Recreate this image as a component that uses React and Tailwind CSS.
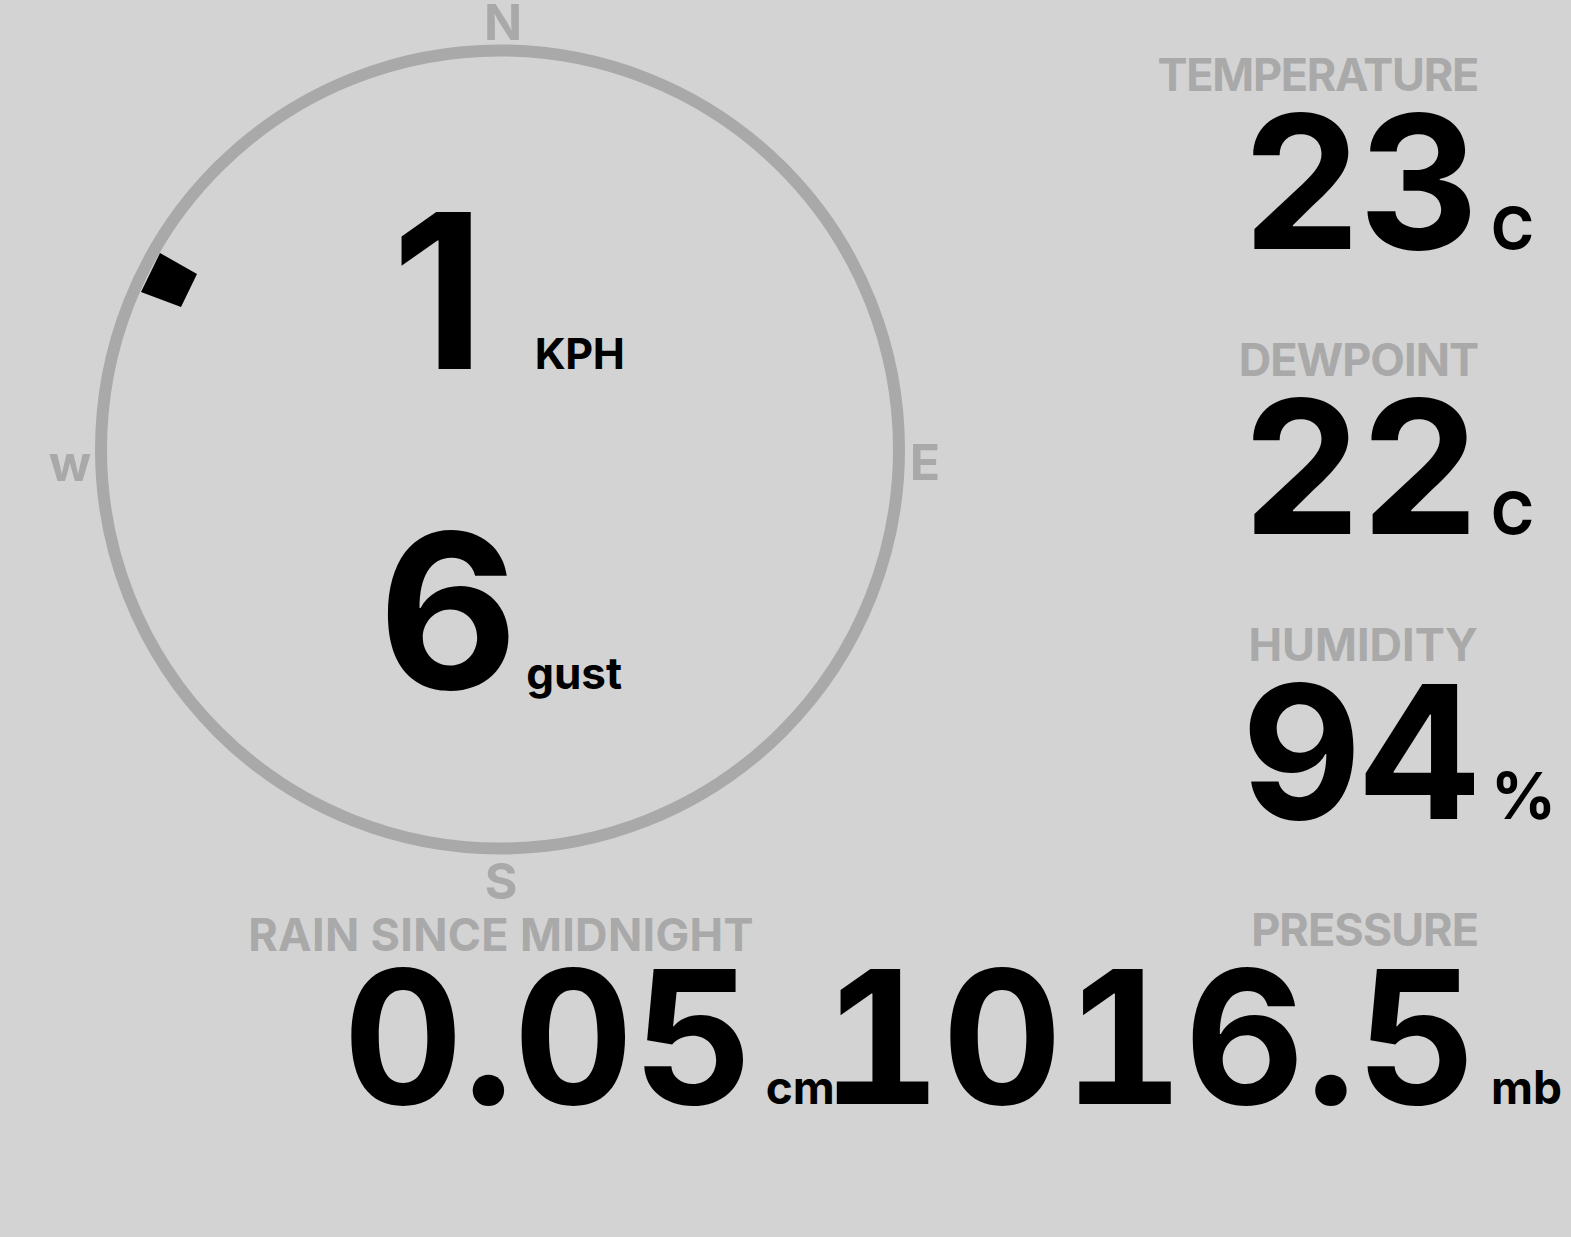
import React from "react";

function Metric({ label, value, unit, unitClass, labelClass = "tracking-[-1px]", valueClass = "tracking-[-2px]" }) {
  return (
    <div className="grid grid-cols-[auto_80px] items-baseline gap-x-[13px]">
      <div className={"col-start-1 justify-self-end text-[45px] leading-[45px] font-bold text-[#a9a9a9] " + labelClass}>
        {label}
      </div>
      <div className={"col-start-1 row-start-2 justify-self-end mt-[10px] text-[186px] leading-[150px] font-bold text-black tabular-nums " + valueClass}>
        {value}
      </div>
      <div className={"col-start-2 row-start-2 font-bold text-black " + unitClass}>{unit}</div>
    </div>
  );
}

function Compass() {
  return (
    <div className="grid w-[950px] h-[907px] shrink-0">
      <svg
        className="col-start-1 row-start-1"
        width="950"
        height="907"
        viewBox="0 0 950 907"
      >
        <circle cx="500" cy="449.5" r="399" fill="none" stroke="#a9a9a9" strokeWidth="12" />
        <polygon points="160,253 197,274 181,307 141,292" fill="#000" />
        <g fill="#a9a9a9" fontFamily="Inter, sans-serif" fontWeight="700" fontSize="50">
          <text x="503" y="40" textAnchor="middle">N</text>
          <text x="501" y="899" textAnchor="middle">S</text>
          <text x="925" y="480" textAnchor="middle">E</text>
          <text x="70" y="481" textAnchor="middle">w</text>
        </g>
      </svg>
      <div className="col-start-1 row-start-1 flex flex-col items-center w-[1010px] pt-[206px]">
        <div className="flex items-baseline ml-[6px]">
          <span className="text-[216px] leading-[170px] font-bold text-black">1</span>
          <span className="ml-[50px] text-[43px] leading-none font-bold text-black tracking-[-0.5px]">KPH</span>
        </div>
        <div className="flex items-baseline mt-[150px] mr-[10px]">
          <span className="text-[216px] leading-[170px] font-bold text-black">6</span>
          <span className="ml-[8px] text-[44px] leading-none font-bold text-black">gust</span>
        </div>
      </div>
    </div>
  );
}

export default function App() {
  return (
    <div className="w-[1571px] h-[1237px] bg-[#d3d3d3] overflow-hidden font-['Inter',sans-serif] flex flex-col">
      <div className="flex h-[907px]">
        <Compass />
        <div className="flex-1 flex flex-col items-end pt-[52px] gap-[80px]">
          <Metric label="TEMPERATURE" labelClass="tracking-[-1.3px]" value="23" unit="C" unitClass="text-[58px] leading-none" />
          <Metric label="DEWPOINT" value="22" unit="C" unitClass="text-[58px] leading-none" />
          <Metric label="HUMIDITY" labelClass="tracking-[0px]" value="94" unit="%" unitClass="text-[64px] leading-none" />
        </div>
      </div>
      <div className="flex justify-end items-start">
        <div className="grid grid-cols-[auto_auto] items-baseline gap-x-[12px] mr-[-14px]">
          <div className="col-start-1 justify-self-end pt-[5px] mb-[-5px] text-[45px] leading-[45px] font-bold text-[#a9a9a9] tracking-[0.3px] whitespace-nowrap">
            RAIN SINCE MIDNIGHT
          </div>
          <div className="col-start-1 row-start-2 justify-self-end mt-[10px] text-[186px] leading-[150px] font-bold text-black tracking-[0px] tabular-nums">
            0.05
          </div>
          <div className="col-start-2 row-start-2 text-[46px] leading-none font-bold text-black">cm</div>
        </div>
        <Metric label="PRESSURE" value="1016.5" valueClass="tracking-[1px]" unit="mb" unitClass="text-[46px] leading-none" />
      </div>
    </div>
  );
}
